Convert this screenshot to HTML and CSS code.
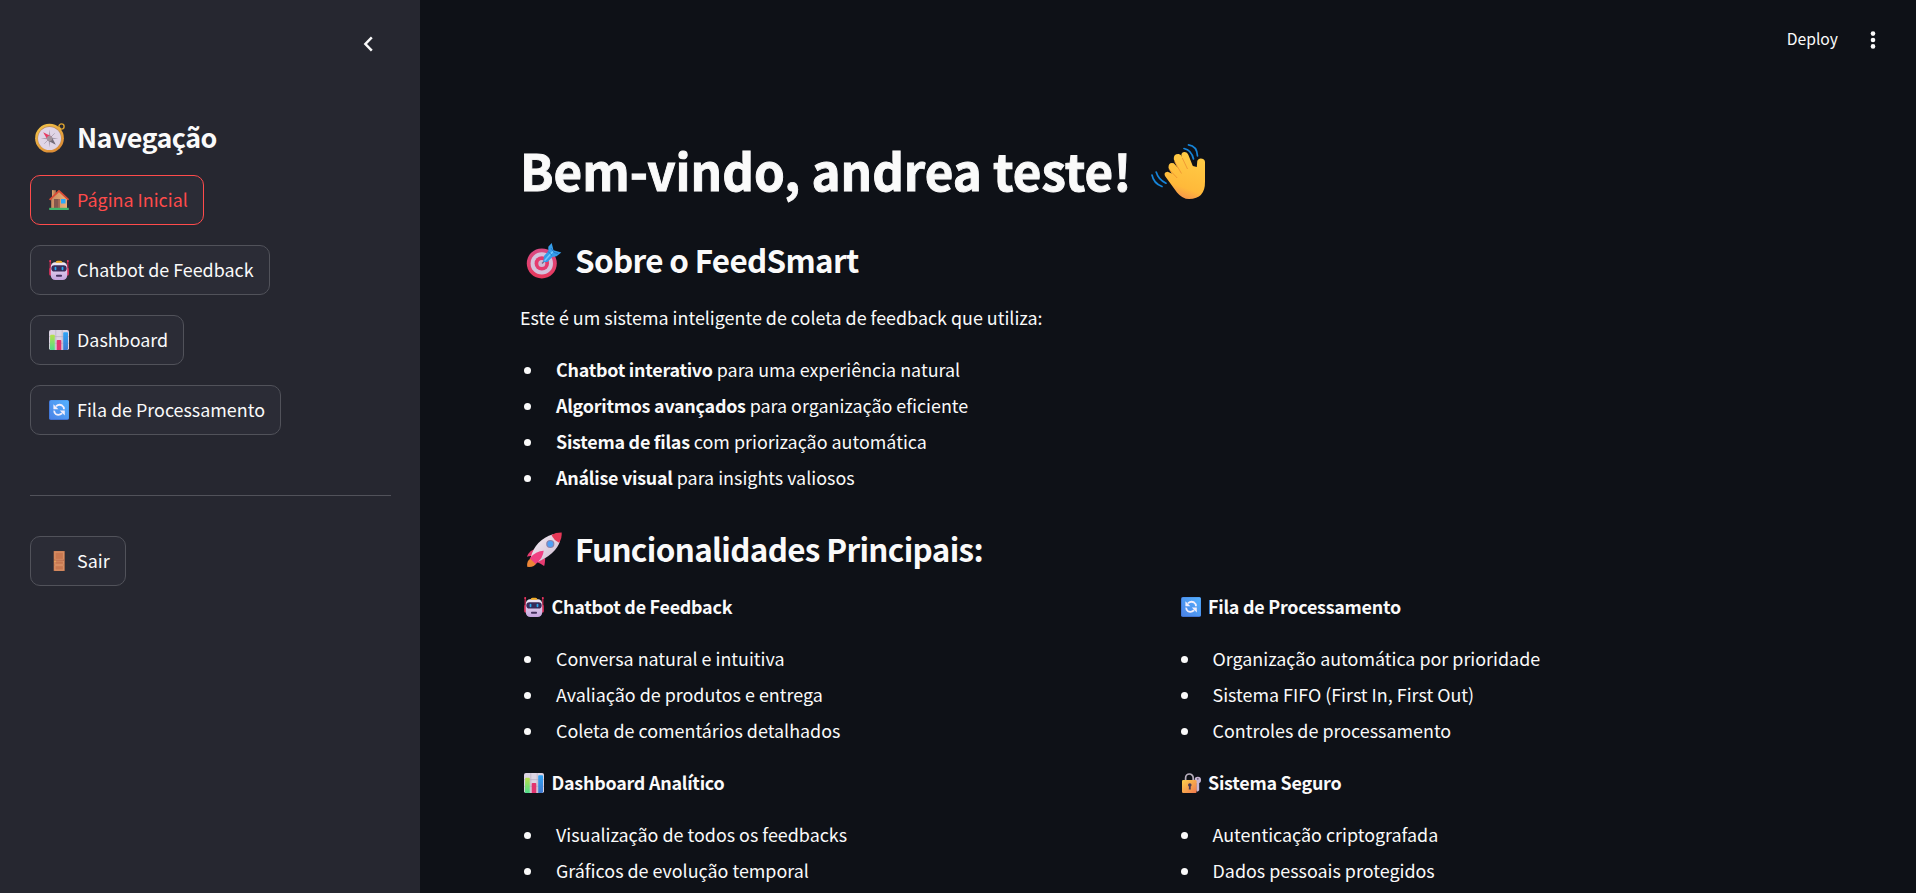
FILE: index.html
```html
<!DOCTYPE html>
<html lang="pt-BR">
<head>
<meta charset="utf-8">
<title>FeedSmart</title>
<link rel="stylesheet" href="styles.css">
</head>
<body>
<svg class="sprite" aria-hidden="true">
  <defs>
    <linearGradient id="gold" x1="0" y1="0" x2="0.6" y2="1"><stop offset="0" stop-color="#f5c84a"/><stop offset="1" stop-color="#dc8c35"/></linearGradient>
    <linearGradient id="face" x1="0" y1="0" x2="0" y2="1"><stop offset="0" stop-color="#f1ebf6"/><stop offset="1" stop-color="#c5a3de"/></linearGradient>
    <linearGradient id="green" x1="0" y1="0" x2="0" y2="1"><stop offset="0" stop-color="#b9e04b"/><stop offset="1" stop-color="#4fdc8b"/></linearGradient>
    <linearGradient id="blue" x1="0" y1="0" x2="0" y2="1"><stop offset="0" stop-color="#2fa4f6"/><stop offset="1" stop-color="#4179cf"/></linearGradient>
    <linearGradient id="tile" x1="1" y1="0" x2="0" y2="1"><stop offset="0" stop-color="#54b2ff"/><stop offset="1" stop-color="#4b83e6"/></linearGradient>
    <linearGradient id="lock" x1="0" y1="0" x2="1" y2="1"><stop offset="0" stop-color="#fdd04c"/><stop offset="1" stop-color="#f0784e"/></linearGradient>
    <linearGradient id="hand" gradientUnits="userSpaceOnUse" x1="42" y1="12" x2="26" y2="56"><stop offset="0" stop-color="#ffcb45"/><stop offset="0.7" stop-color="#ffb93a"/><stop offset="1" stop-color="#f38a50"/></linearGradient>
    <linearGradient id="ring" x1="0" y1="0" x2="0" y2="1"><stop offset="0" stop-color="#d94a83"/><stop offset="1" stop-color="#e8385c"/></linearGradient>
    <linearGradient id="hull" x1="0" y1="0" x2="1" y2="1"><stop offset="0" stop-color="#f4eef5"/><stop offset="1" stop-color="#cdb9cf"/></linearGradient>
    <linearGradient id="wall" x1="0" y1="0" x2="1" y2="0"><stop offset="0" stop-color="#c98b62"/><stop offset="1" stop-color="#ecb077"/></linearGradient>
  </defs>
  <symbol id="compass" viewBox="0 0 30 30">
    <circle cx="26.5" cy="3.5" r="2.6" fill="none" stroke="#d9a12f" stroke-width="1.4"/>
    <circle cx="24" cy="6" r="2" fill="#e6af38"/>
    <circle cx="14.5" cy="15.2" r="14.4" fill="url(#gold)"/>
    <circle cx="14.5" cy="15.2" r="11.9" fill="#b88a62"/>
    <circle cx="14.5" cy="15.5" r="11.5" fill="#e0d5e6"/>
    <path d="M14.5 6.5l1 8 7.8 1-7.8 1-1 8-1-8-7.8-1 7.8-1z" fill="#aaa0b0"/>
    <path d="M9.3 10.3l10.4 10.4M19.7 10.3L9.3 20.7" stroke="#b4aaba" stroke-width="1"/>
    <path d="M8.2 9.2l8.4 4.3-3.8 3.8z" fill="#e83b62"/>
    <path d="M20.8 21.8l-8.2-4.4 3.9-3.8z" fill="#746c79"/>
    <circle cx="14.6" cy="15.5" r="2.7" fill="#a1949c"/>
  </symbol>
  <symbol id="house" viewBox="0 0 20 20">
    <path d="M3 0.2h3.8v8H3z" fill="#bd7f58"/><path d="M3 0.2h1.5v8H3z" fill="#d7a16d"/>
    <path d="M2.2 9L10 1.5 18 9v10H2.2z" fill="url(#wall)"/>
    <path d="M0.6 9.8L10 0.9l9.5 8.9" fill="none" stroke="#dc4b35" stroke-width="1.8"/>
    <path d="M5 9h5.6v9H5z" fill="#82574e"/><path d="M9 9h1.6v9H9z" fill="#9e6855"/>
    <path d="M12 9h4.5v4.5H12z" fill="#28a8fa"/>
    <path d="M0.2 17.8h19.6V20H0.2z" fill="#40b66a"/>
  </symbol>
  <symbol id="robot" viewBox="0 0 20 20">
    <path d="M1.2 1v13M18.8 1v13" stroke="#cf254f" stroke-width="1.2"/>
    <circle cx="1.2" cy="1" r="1" fill="#f13662"/><circle cx="18.8" cy="1" r="1" fill="#f13662"/>
    <rect x="0.2" y="8" width="3" height="7.5" rx="1" fill="#d7305a"/><rect x="16.8" y="8" width="3" height="7.5" rx="1" fill="#d7305a"/>
    <rect x="1.8" y="2.2" width="16.4" height="17.8" rx="4.5" fill="url(#face)"/>
    <path d="M6.5 2.7Q6.8 0.8 8.5 0.8h3q1.7 0 2 1.9z" fill="#f5ae24"/>
    <rect x="2.3" y="5.3" width="15.4" height="6.3" rx="3.1" fill="#382c59"/>
    <rect x="5.6" y="6.8" width="1.8" height="3.4" rx="0.9" fill="#28a9ee"/><rect x="12.6" y="6.8" width="1.8" height="3.4" rx="0.9" fill="#28a9ee"/>
    <rect x="7" y="14.8" width="6" height="2" rx="0.8" fill="#44305d"/>
  </symbol>
  <symbol id="chart" viewBox="0 0 20 20">
    <rect width="20" height="20" rx="1.8" fill="#dcd4e3"/>
    <path d="M6.8 0v20M13.2 0v20M0 6.6h20M0 13.3h20" stroke="#b9afc1" stroke-width="0.7"/>
    <path d="M1.2 5.5q0-.8.8-.8h3q.8 0 .8.8V20H2q-1.2 0-1.2-1z" fill="url(#green)"/>
    <path d="M7.7 10.8q0-.8.8-.8h3q.8 0 .8.8V20H7.7z" fill="#e2346f"/>
    <path d="M14.2 3q0-.8.8-.8h3.2q.8 0 .8.8v15.5q0 1.5-1.2 1.5h-3.6z" fill="url(#blue)"/>
  </symbol>
  <symbol id="refresh" viewBox="0 0 20 20">
    <rect width="20" height="20" rx="1.8" fill="#3f74d5"/>
    <rect x="0.8" y="0.2" width="19" height="18.8" rx="1.5" fill="url(#tile)"/>
    <path d="M7 6.2Q10 3.8 13 5.4 15.2 6.8 15 9.2M13.2 13.2Q10 15.8 7 14.2 5 12.8 5.2 10.6" fill="none" stroke="#f3effc" stroke-width="1.8"/>
    <path d="M4.4 4.3v5h5zM15.8 15.4v-5h-5z" fill="#f3effc"/>
  </symbol>
  <symbol id="door" viewBox="0 0 20 20">
    <rect x="4.7" width="11" height="20" rx="0.5" fill="#cc7f55"/>
    <path d="M6 1.2h8.4v7.2H6zM6 10h8.4v3.3H6zM6 14.7h8.4V19H6z" fill="#c87851" stroke="#e09b70" stroke-width="0.7"/>
    <path d="M5 9.2h10.4" stroke="#ac6046" stroke-width="0.6"/><circle cx="6" cy="10.2" r="0.7" fill="#f2b557"/>
  </symbol>
  <symbol id="lockkey" viewBox="0 0 20 20">
    <path d="M4.6 7V5a3.8 4 0 0 1 7.6 0v3" fill="none" stroke="#b8afbd" stroke-width="1.7"/>
    <circle cx="16.8" cy="7" r="3.2" fill="#c5b4d3"/><circle cx="16.8" cy="5.8" r="0.9" fill="#665674"/>
    <path d="M15.2 9h3v8.3l-1.5 1.5-1.5-1.2z" fill="#c7b8d6"/>
    <rect x="1" y="7" width="14.6" height="13" rx="1.2" fill="url(#lock)"/>
    <circle cx="8.8" cy="12" r="1.8" fill="#4c3b55"/><path d="M8 12h1.6l.2 4.4H7.8z" fill="#4c3b55"/>
  </symbol>
  <symbol id="target" viewBox="0 0 36 36">
    <circle cx="15.8" cy="20.4" r="15" fill="url(#ring)"/><circle cx="15.8" cy="20.4" r="11.2" fill="#d5c2dc"/>
    <circle cx="15.8" cy="20.4" r="7.2" fill="#e53a6e"/><circle cx="15.8" cy="20.4" r="3.5" fill="#cdbbd5"/>
    <path d="M16 20.5l6-6" stroke="#766a88" stroke-width="1.5"/>
    <path d="M17.2 19.1L18 13l4.3-4.8V3.7L25.7 0l1.8 7.2 7.8 2.2-4.7 3.8-4.2.8-5 5z" fill="#359de9"/>
    <path d="M18.6 17.7l8.7-9.8" stroke="#73caff" stroke-width="1.5"/><path d="M22 8.4l4 4M25 5l3 4.5 4 1" stroke="#2076c7" fill="none" stroke-width="1"/>
  </symbol>
  <symbol id="rocket" viewBox="0 0 36 36">
    <path d="M1.2 34.8Q0.5 28 4.8 26.4l5.5 4.8Q8.5 35.5 1.2 34.8z" fill="#ed8637"/>
    <path d="M10.2 16.8Q3.6 17.8.9 24.8q3-1.1 5.7-.6zM19.2 26q-.3 6.5-1.1 8-3.4-2.6-7.4-3.9z" fill="#e53c71"/>
    <path d="M5 24.5Q9.6 7.8 27 2.2l7 7Q30 22 10.5 30.5z" fill="url(#hull)"/>
    <path d="M25.5 3Q29.5.5 35.7.6q.3 5.9-2.5 10.1Q27.8 8.3 25.5 3z" fill="#e63857"/>
    <circle cx="24.3" cy="12" r="4.1" fill="#8a82aa"/><circle cx="24.3" cy="12" r="2.9" fill="#4f9ff4"/>
    <path d="M3.6 26.2Q10 19 17.7 18.8 17.2 26 9.8 31.9z" fill="#f03f82"/>
  </symbol>
  <symbol id="wave" viewBox="0 0 56 56">
    <path d="M33 4.5Q40.5 6 42.5 15M37.5.9Q46 2 46.5 12M1 31q1.7 8.5 10 11.5M5.2 28q2.1 7.5 9.8 11.2" fill="none" stroke="#1684d8" stroke-width="1.7" stroke-linecap="round"/>
    <g fill="url(#hand)">
      <path d="M14 32q-1.6-4 2.6-4.3L22 30l16-9 7.8 2 .5-6.2q2-3.4 5-2 2.7.6 2.7 3.8v19Q54.3 55 38 55q-6.5 0-12-6.6z"/>
      <path d="M17.5 24q-.2-6.3 5.3-4.7L35 33l-9 6z"/>
      <path d="M22.8 15.2q-.4-5.5 5-5.2 2.4.5 3.2 3L39 31l-8 4z"/>
      <path d="M30.4 12.3q-.5-4.2 3.4-4.3 2.5 0 3.5 2.8L43 25l-8 6z"/>
    </g>
    <path d="M18.2 25.5l8 8.5M23.5 17.5l7 12M31.2 13.8l5.3 11.2" fill="none" stroke="#e9892f" stroke-width="1" opacity="0.7"/>
  </symbol>
</svg>

<div class="app">
  <aside class="sidebar">
    <div class="sidebar-top">
      <svg class="chevron" viewBox="0 0 12 16"><path d="M9.8 1.4L3.4 8l6.4 6.6"/></svg>
    </div>
    <h2 class="nav-title"><svg class="icon-nav"><use href="#compass"/></svg><span>Navegação</span></h2>
    <nav class="nav">
      <button class="btn active b1"><svg class="icon"><use href="#house"/></svg><span>Página Inicial</span></button>
      <button class="btn b2"><svg class="icon"><use href="#robot"/></svg><span>Chatbot de Feedback</span></button>
      <button class="btn b3"><svg class="icon"><use href="#chart"/></svg><span>Dashboard</span></button>
      <button class="btn b4"><svg class="icon"><use href="#refresh"/></svg><span>Fila de Processamento</span></button>
    </nav>
    <hr class="divider">
    <button class="btn b5"><svg class="icon"><use href="#door"/></svg><span>Sair</span></button>
  </aside>

  <main class="main">
    <header class="toolbar">
      <span class="deploy">Deploy</span>
      <svg class="dots" viewBox="0 0 6 18"><circle cx="3" cy="2.6" r="2.3"/><circle cx="3" cy="9" r="2.3"/><circle cx="3" cy="15.4" r="2.3"/></svg>
    </header>
    <div class="content">
      <h1 class="title"><span>Bem-vindo, andrea teste!</span><svg class="icon-wave"><use href="#wave"/></svg></h1>
      <h2 class="section"><svg class="icon-lg"><use href="#target"/></svg><span>Sobre o FeedSmart</span></h2>
      <p class="text">Este é um sistema inteligente de coleta de feedback que utiliza:</p>
      <ul class="list">
        <li><span><b>Chatbot interativo</b> para uma experiência natural</span></li>
        <li><span><b>Algoritmos avançados</b> para organização eficiente</span></li>
        <li><span><b>Sistema de filas</b> com priorização automática</span></li>
        <li><span><b>Análise visual</b> para insights valiosos</span></li>
      </ul>
      <h2 class="section second"><svg class="icon-lg"><use href="#rocket"/></svg><span>Funcionalidades Principais:</span></h2>
      <div class="columns">
        <div>
          <p class="feature"><svg class="icon"><use href="#robot"/></svg><b>Chatbot de Feedback</b></p>
          <ul class="list"><li><span>Conversa natural e intuitiva</span></li><li><span>Avaliação de produtos e entrega</span></li><li><span>Coleta de comentários detalhados</span></li></ul>
          <p class="feature next"><svg class="icon"><use href="#chart"/></svg><b>Dashboard Analítico</b></p>
          <ul class="list"><li><span>Visualização de todos os feedbacks</span></li><li><span>Gráficos de evolução temporal</span></li></ul>
        </div>
        <div>
          <p class="feature"><svg class="icon"><use href="#refresh"/></svg><b>Fila de Processamento</b></p>
          <ul class="list"><li><span>Organização automática por prioridade</span></li><li><span>Sistema FIFO (First In, First Out)</span></li><li><span>Controles de processamento</span></li></ul>
          <p class="feature next"><svg class="icon"><use href="#lockkey"/></svg><b>Sistema Seguro</b></p>
          <ul class="list"><li><span>Autenticação criptografada</span></li><li><span>Dados pessoais protegidos</span></li></ul>
        </div>
      </div>
    </div>
  </main>
</div>
</body>
</html>
```
FILE: styles.css
```css
* { box-sizing: border-box; margin: 0; padding: 0; }
body {
  height: 893px;
  overflow: hidden;
  background: #0e1117;
  color: #fafafa;
  font-family: "Noto Sans CJK SC", "Noto Sans", sans-serif;
  font-size: 17.9px;
  line-height: 32px;
  white-space: nowrap;
}
svg { display: block; flex: none; }
.sprite { position: absolute; width: 0; height: 0; }
.app { display: grid; grid-template-columns: 420px 1fr; height: 893px; overflow: hidden; }

.sidebar { background: #262730; padding: 0 29px 0 30px; }
.sidebar-top { height: 117px; padding: 36px 17.5px 0 0; display: flex; justify-content: flex-end; }
.chevron { width: 12px; height: 16px; fill: none; stroke: #fafafa; stroke-width: 2.5; }
.nav-title { height: 42px; margin-bottom: 16px; padding-left: 5px; display: flex; align-items: center; gap: 12px; font-size: 26.9px; font-weight: 600; letter-spacing: -0.52px; }
.icon-nav { width: 30px; height: 30px; }
.nav { display: flex; flex-direction: column; align-items: flex-start; gap: 20px; }
.btn { display: flex; align-items: center; gap: 8px; height: 50px; padding-left: 18px; border: 1px solid #51525a; border-radius: 10px; background: #2b2c36; color: #fafafa; font: inherit; }
.btn.active { border-color: #ff4b4b; color: #ff4b4b; }
.nav-title span, .btn span, .section span, .list span, .feature b, .deploy { padding-bottom: 2px; }
.icon { width: 20px; height: 20px; }
.b1 { width: 174px; }
.b2 { width: 240px; }
.b3 { width: 154px; }
.b4 { width: 251px; }
.b5 { width: 96px; }
.divider { height: 1px; border: 0; background: #51525a; margin: 60px 0 40px; }

.toolbar { height: 79px; display: flex; justify-content: flex-end; align-items: center; gap: 32px; padding-right: 40px; }
.deploy { font-size: 15.7px; }
.dots { width: 6px; height: 18px; fill: #fafafa; }
.content { padding: 61px 0 0 100px; }
.title { height: 66px; display: flex; align-items: center; gap: 20px; font-size: 49.3px; font-weight: 700; -webkit-text-stroke: 0.9px #fafafa; }
.title span { padding-bottom: 6px; }
.icon-wave { width: 56px; height: 56px; margin-bottom: 2px; }
.section { height: 42px; margin-top: 35px; padding-left: 6px; display: flex; align-items: center; gap: 13px; font-size: 31.4px; font-weight: 600; letter-spacing: -0.65px; }
.section span { padding-bottom: 4px; }
.section.second { margin-top: 34px; }
.icon-lg { width: 36px; height: 36px; margin-bottom: 2px; }
.text { height: 33px; margin-top: 18px; }
.list { margin-top: 18px; list-style: none; }
.list li { height: 36px; display: flex; align-items: center; padding-left: 4px; gap: 25px; }
.list li::before { content: ""; width: 7px; height: 7px; border-radius: 50%; background: #fafafa; }
.columns { display: grid; grid-template-columns: 656.5px 1fr; margin-top: 19px; }
.feature { height: 32px; display: flex; align-items: center; gap: 7.5px; padding-left: 4px; }
.feature.next { margin-top: 18px; }
b { font-weight: 600; letter-spacing: -0.24px; }
```
